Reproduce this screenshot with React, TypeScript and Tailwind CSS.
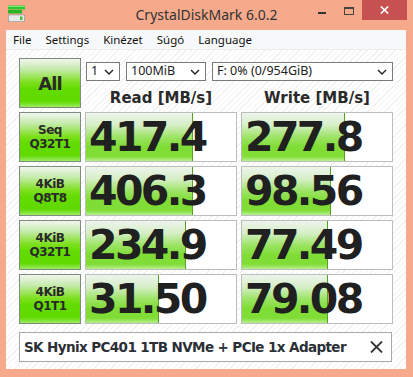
import React from "react";

const rows = [
  { l1: "Seq", l2: "Q32T1", r: "417.4", rw: 107, w: "277.8", ww: 103 },
  { l1: "4KiB", l2: "Q8T8", r: "406.3", rw: 107, w: "98.56", ww: 89 },
  { l1: "4KiB", l2: "Q32T1", r: "234.9", rw: 100, w: "77.49", ww: 86 },
  { l1: "4KiB", l2: "Q1T1", r: "31.50", rw: 73, w: "79.08", ww: 86 },
];

const labelBg =
  "bg-[linear-gradient(to_bottom,#f1f5ef_0%,#c4ebaa_22%,#7fe020_48%,#62dc00_62%,#5fd900_88%,#9cec62_100%)]";
const fillBg =
  "bg-[linear-gradient(to_bottom,#eef4ec_0%,#d6efc8_25%,#9de466_50%,#80dd36_70%,#80dd36_90%,#b6f090_100%)]";

function Chevron() {
  return (
    <svg width="10" height="6" viewBox="0 0 10 6" className="shrink-0">
      <path d="M1 1 L5 5 L9 1" fill="none" stroke="#222" strokeWidth="1.4" />
    </svg>
  );
}

function Select({ w, text }: { w: number; text: string }) {
  return (
    <div
      className="h-[19px] border border-[#7a7a7a] bg-white flex items-center justify-between pl-[4px] pr-[5px] text-[12.5px] text-[#222] leading-none"
      style={{ width: w }}
    >
      <span>{text}</span>
      <Chevron />
    </div>
  );
}

function Label({ a, b }: { a: string; b?: string }) {
  return (
    <div
      className={`h-[50px] border border-[#7f8b7f] ${labelBg} flex flex-col items-center justify-center text-[#2a2a2a] font-bold font-['DejaVu_Sans',sans-serif]`}
    >
      {b ? (
        <>
          <div className="text-[12px] leading-[14px] tracking-[-0.5px]">{a}</div>
          <div className="text-[12px] leading-[14px] tracking-[-0.5px]">{b}</div>
        </>
      ) : (
        <div className="text-[18px] tracking-[-1px]">{a}</div>
      )}
    </div>
  );
}

function Value({ v, fw }: { v: string; fw: number }) {
  return (
    <div className="relative h-[50px] border border-[#bdbdbd] bg-white overflow-hidden">
      <div
        className={`absolute left-0 top-0 bottom-0 ${fillBg} border-r border-[#55a025]`}
        style={{ width: fw }}
      />
      <div className="relative pl-[3px] leading-[48px] text-[41px] font-bold tracking-[-2.6px] text-[#202020] font-['DejaVu_Sans',sans-serif]">
        {v}
      </div>
    </div>
  );
}

export default function App() {
  return (
    <div className="w-[413px] h-[377px] bg-[#f6aa8b] flex flex-col font-['Noto_Sans',sans-serif] overflow-hidden">
      {/* Title bar */}
      <div className="h-[30px] relative flex items-center justify-center shrink-0">
        <svg
          width="18"
          height="18"
          viewBox="0 0 18 18"
          className="absolute left-[8px] top-[5px]"
        >
          <rect x="0" y="0.5" width="17" height="4" rx="0.5" fill="#2ec82e" />
          <rect x="0" y="1" width="17" height="1" fill="#7ae87a" />
          <rect x="0" y="5" width="14" height="3.5" rx="0.5" fill="#25b525" />
          <rect x="0" y="9.5" width="17" height="7.5" rx="1.5" fill="#9a9a9a" />
          <rect x="0.8" y="10.2" width="15.4" height="6" rx="1" fill="#e9e9e9" />
          <rect x="12" y="11.5" width="2.5" height="3.5" fill="#3bc43b" />
        </svg>
        <div className="text-[14px] text-[#333] leading-none -mt-[1px]">
          CrystalDiskMark 6.0.2
        </div>
        <div className="absolute left-[318px] top-[12px] w-[8px] h-[2px] bg-[#333]" />
        <div className="absolute left-[344px] top-[7px] w-[10px] h-[8px] border border-[#444] border-t-2" />
        <div className="absolute left-[362px] top-0 w-[45px] h-[20px] bg-[#c75050] flex items-center justify-center">
          <svg width="9" height="8" viewBox="0 0 9 8">
            <path d="M0.8 0.5 L8.2 7.5 M8.2 0.5 L0.8 7.5" stroke="#fff" strokeWidth="1.6" />
          </svg>
        </div>
      </div>

      {/* Window body */}
      <div className="ml-[6px] mr-[7px] mb-[8px] flex-1 bg-white flex flex-col">
        {/* Menu */}
        <div className="h-[20px] bg-[#f7f8f9] border-b border-[#ececec] flex items-center pl-[7px] gap-[14px] text-[11.5px] text-[#111] leading-none">
          <span>File</span>
          <span>Settings</span>
          <span>Kinézet</span>
          <span>Súgó</span>
          <span>Language</span>
        </div>

        {/* Content */}
        <div className="flex-1 bg-[repeating-linear-gradient(135deg,#ffffff_0px,#ffffff_3px,#f1f1f1_3px,#f1f1f1_4px)] pl-[13px] pt-[8px]">
          <div className="grid grid-cols-[62px_152px_152px] gap-x-[4px] gap-y-[4px]">
            <Label a="All" />
            <div className="col-span-2 flex flex-col h-[50px]">
              <div className="flex gap-[6px] pt-[4px] pl-[1px]">
                <Select w={34} text="1" />
                <Select w={80} text="100MiB" />
                <Select w={181} text="F: 0% (0/954GiB)" />
              </div>
              <div className="grid grid-cols-[152px_152px] gap-x-[4px] mt-[8px] h-[19px] leading-[19px] text-[15px] font-bold text-[#2a2a2a] font-['DejaVu_Sans',sans-serif] text-center">
                <div>Read [MB/s]</div>
                <div>Write [MB/s]</div>
              </div>
            </div>
            {rows.map((r, i) => (
              <React.Fragment key={i}>
                <Label a={r.l1} b={r.l2} />
                <Value v={r.r} fw={r.rw} />
                <Value v={r.w} fw={r.ww} />
              </React.Fragment>
            ))}
          </div>

          {/* Bottom comment bar */}
          <div className="mt-[8px] w-[373px] h-[30px] border border-[#a8a8a8] bg-white flex items-center justify-between pl-[4px] pr-[8px]">
            <span className="text-[13.5px] font-bold tracking-[-0.6px] text-[#2b2f36] font-['DejaVu_Sans',sans-serif]">
              SK Hynix PC401 1TB NVMe + PCIe 1x Adapter
            </span>
            <svg width="13" height="12" viewBox="0 0 13 12">
              <path d="M1 0.5 L12 11.5 M12 0.5 L1 11.5" stroke="#333" strokeWidth="1.8" />
            </svg>
          </div>
        </div>
      </div>
    </div>
  );
}
